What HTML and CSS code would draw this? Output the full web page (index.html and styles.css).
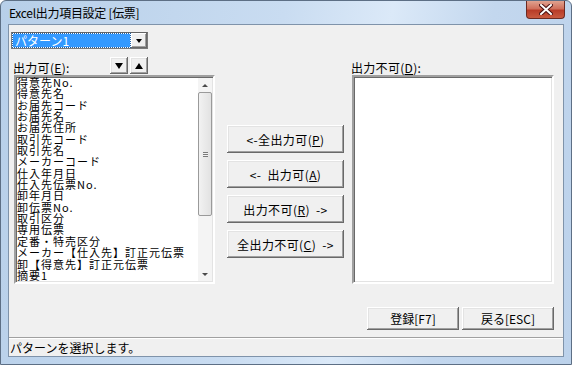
FILE: index.html
```html
<!DOCTYPE html>
<html lang="ja">
<head>
    <meta charset="UTF-8">
    <title>Excel出力項目設定 [伝票]</title>
    <link rel="stylesheet" href="styles.css">
</head>
<body>
    <div class="window">
        <div class="titlebar">
            <span class="title">Excel出力項目設定 [伝票]</span>
            <div class="close">
                <svg width="14" height="11" viewBox="0 0 14 11">
                    <path d="M2 1 L12 10 M12 1 L2 10" stroke="#4a1010" stroke-width="4" stroke-linecap="square"/>
                    <path d="M2 1 L12 10 M12 1 L2 10" stroke="#fff" stroke-width="2" stroke-linecap="square"/>
                </svg>
            </div>
        </div>

        <div class="client">
            <div class="combo">
                <span class="combo-value"><span class="sel">パターン1</span></span>
                <span class="combo-btn"><i class="tri down"></i></span>
            </div>

            <div class="panes">
                <div class="pane pane-left">
                    <div class="pane-head">
                        <span class="pane-label">出力可(<u>E</u>):</span>
                        <div class="order">
                            <span class="btn small"><i class="tri down big"></i></span>
                            <span class="btn small"><i class="tri up big"></i></span>
                        </div>
                    </div>
                    <div class="listbox">
                        <ul class="items">
                            <li>得意先No.</li>
                            <li>得意先名</li>
                            <li>お届先コード</li>
                            <li>お届先名</li>
                            <li>お届先住所</li>
                            <li>取引先コード</li>
                            <li>取引先名</li>
                            <li>メーカーコード</li>
                            <li>仕入年月日</li>
                            <li>仕入先伝票No.</li>
                            <li>卸年月日</li>
                            <li>卸伝票No.</li>
                            <li>取引区分</li>
                            <li>専用伝票</li>
                            <li>定番・特売区分</li>
                            <li>メーカー【仕入先】訂正元伝票</li>
                            <li>卸【得意先】訂正元伝票</li>
                            <li>摘要1</li>
                        </ul>
                        <div class="vscroll">
                            <span class="arrow"><i class="tri up tiny"></i></span>
                            <span class="thumb"><span class="grip"></span></span>
                            <span class="track"></span>
                            <span class="arrow"><i class="tri down tiny"></i></span>
                        </div>
                    </div>
                </div>

                <div class="actions">
                    <span class="btn action">&lt;-全出力可(<u>P</u>)</span>
                    <span class="btn action">&lt;-&nbsp;&nbsp;出力可(<u>A</u>)</span>
                    <span class="btn action">出力不可(<u>R</u>)&nbsp;&nbsp;-&gt;</span>
                    <span class="btn action">全出力不可(<u>C</u>)&nbsp;&nbsp;-&gt;</span>
                </div>

                <div class="pane pane-right">
                    <div class="pane-head">
                        <span class="pane-label">出力不可(<u>D</u>):</span>
                    </div>
                    <div class="listbox"></div>
                </div>
            </div>

            <div class="footer">
                <span class="btn wide">登録[F7]</span>
                <span class="btn wide">戻る[ESC]</span>
            </div>

            <div class="status">パターンを選択します。</div>
        </div>
    </div>
</body>
</html>
```

FILE: styles.css
```css
* {
    margin: 0;
    padding: 0;
    box-sizing: border-box;
}

body {
    font-family: "Noto Sans CJK JP", "DejaVu Sans", sans-serif;
    font-size: 12px;
    color: #000;
    background-color: #fff;
}

.window {
    width: 572px;
    height: 365px;
    display: flex;
    flex-direction: column;
    padding: 0 7px 7px 7px;
    border: 1px solid #5d6f85;
    border-radius: 6px 6px 0 0;
    background: linear-gradient(100deg, #b7cfe9 0%, #c9dcf1 45%, #dbe9f8 62%, #c3d7ee 78%, #bcd2eb 100%);
}

.titlebar {
    height: 23px;
    display: flex;
    align-items: flex-start;
}

.title {
    padding: 4px 0 0 1px;
    line-height: 15px;
    font-size: 12px;
    letter-spacing: -0.3px;
}

.close {
    margin-left: auto;
    margin-right: -1px;
    width: 39px;
    height: 18px;
    display: flex;
    justify-content: center;
    align-items: center;
    border: 1px solid #6b2a22;
    border-top: none;
    border-radius: 0 0 4px 4px;
    background: linear-gradient(#e0a290 0%, #d0705c 45%, #b83c28 55%, #c85a40 100%);
}

.client {
    flex: 1;
    display: flex;
    flex-direction: column;
    background-color: #f0f0f0;
    border: 1px solid #7f93aa;
}

/* combo box */
.combo {
    margin: 7px 0 0 2px;
    width: 137px;
    height: 17px;
    display: flex;
    background-color: #fff;
    border: 1px solid #7a7a7a;
    border-top-color: #646464;
}

.combo-value {
    flex: 1;
    padding: 1px;
}

.sel {
    display: block;
    height: 13px;
    padding-left: 2px;
    line-height: 13px;
    color: #fff;
    background-color: #3399ff;
    outline: 1px dotted #1c5fa8;
}

.combo-btn {
    width: 16px;
    display: flex;
    justify-content: center;
    align-items: center;
    background-color: #f0f0f0;
    box-shadow: inset -1px -1px #696969, inset 1px 1px #fff, inset -2px -2px #a0a0a0;
}

.tri {
    display: block;
    width: 0;
    height: 0;
    border-left: 3px solid transparent;
    border-right: 3px solid transparent;
}

.tri.down {
    border-top: 4px solid #000;
}

.tri.up {
    border-bottom: 4px solid #000;
}

.tri.big {
    border-left-width: 4px;
    border-right-width: 4px;
}

.tri.down.big {
    border-top-width: 6px;
}

.tri.up.big {
    border-bottom-width: 6px;
}

.tri.up.tiny {
    border-bottom: 3px solid #4a4a4a;
}

.tri.down.tiny {
    border-top: 3px solid #4a4a4a;
}

/* buttons */
.btn {
    display: flex;
    justify-content: center;
    align-items: center;
    background-color: #f0f0f0;
    box-shadow: inset -1px -1px #696969, inset 1px 1px #fff, inset -2px -2px #a0a0a0, inset 2px 2px #e3e3e3;
    white-space: nowrap;
}

.btn.small {
    width: 18px;
    height: 17px;
}

.btn.action {
    height: 28px;
    letter-spacing: 0.4px;
}

.btn.wide {
    width: 92px;
    height: 23px;
}

/* panes */
.panes {
    margin-top: 8px;
    display: flex;
}

.pane-left {
    margin-left: 5px;
    width: 201px;
}

.pane-right {
    margin-left: 8px;
    width: 202px;
}

.pane-head {
    height: 18px;
    display: flex;
    align-items: flex-start;
}

.pane-label {
    width: 97px;
    margin-left: -1px;
    padding-top: 4px;
    line-height: 14px;
    letter-spacing: 0.3px;
}

.order {
    display: flex;
    gap: 2px;
}

.listbox {
    height: 209px;
    display: flex;
    background-color: #fff;
    border: 2px solid;
    border-color: #a0a0a0 #fff #fff #a0a0a0;
    box-shadow: inset 1px 1px #696969, inset -1px -1px #e3e3e3;
}

.items {
    flex: 1;
    list-style: none;
    padding: 0 0 0 1px;
    font-size: 11px;
    line-height: 11.35px;
    letter-spacing: 1px;
    white-space: nowrap;
    overflow: hidden;
}

.vscroll {
    width: 14px;
    margin: 1px 1px 1px 0;
    display: flex;
    flex-direction: column;
    background-color: #f4f4f4;
}

.vscroll .arrow {
    height: 14px;
    display: flex;
    justify-content: center;
    align-items: center;
}

.thumb {
    height: 124px;
    display: flex;
    justify-content: center;
    align-items: center;
    border: 1px solid #9a9a9a;
    border-radius: 2px;
    background: linear-gradient(90deg, #f2f2f2, #e2e2e2);
}

.grip {
    width: 5px;
    height: 5px;
    border-top: 1px solid #7a7a7a;
    border-bottom: 1px solid #7a7a7a;
    background: linear-gradient(#f2f2f2 1px, #7a7a7a 1px, #7a7a7a 2px, #f2f2f2 2px);
}

.track {
    flex: 1;
}

.actions {
    margin-left: 12px;
    width: 117px;
    padding-top: 68px;
    display: flex;
    flex-direction: column;
    gap: 7px;
}

/* bottom */
.footer {
    margin-top: 23px;
    padding-right: 9px;
    display: flex;
    justify-content: flex-end;
    gap: 3px;
}

.status {
    flex: 1;
    margin-top: 7px;
    padding-left: 1px;
    display: flex;
    align-items: center;
    border-top: 1px solid #a0a0a0;
    box-shadow: inset 0 1px #fff;
}
```
